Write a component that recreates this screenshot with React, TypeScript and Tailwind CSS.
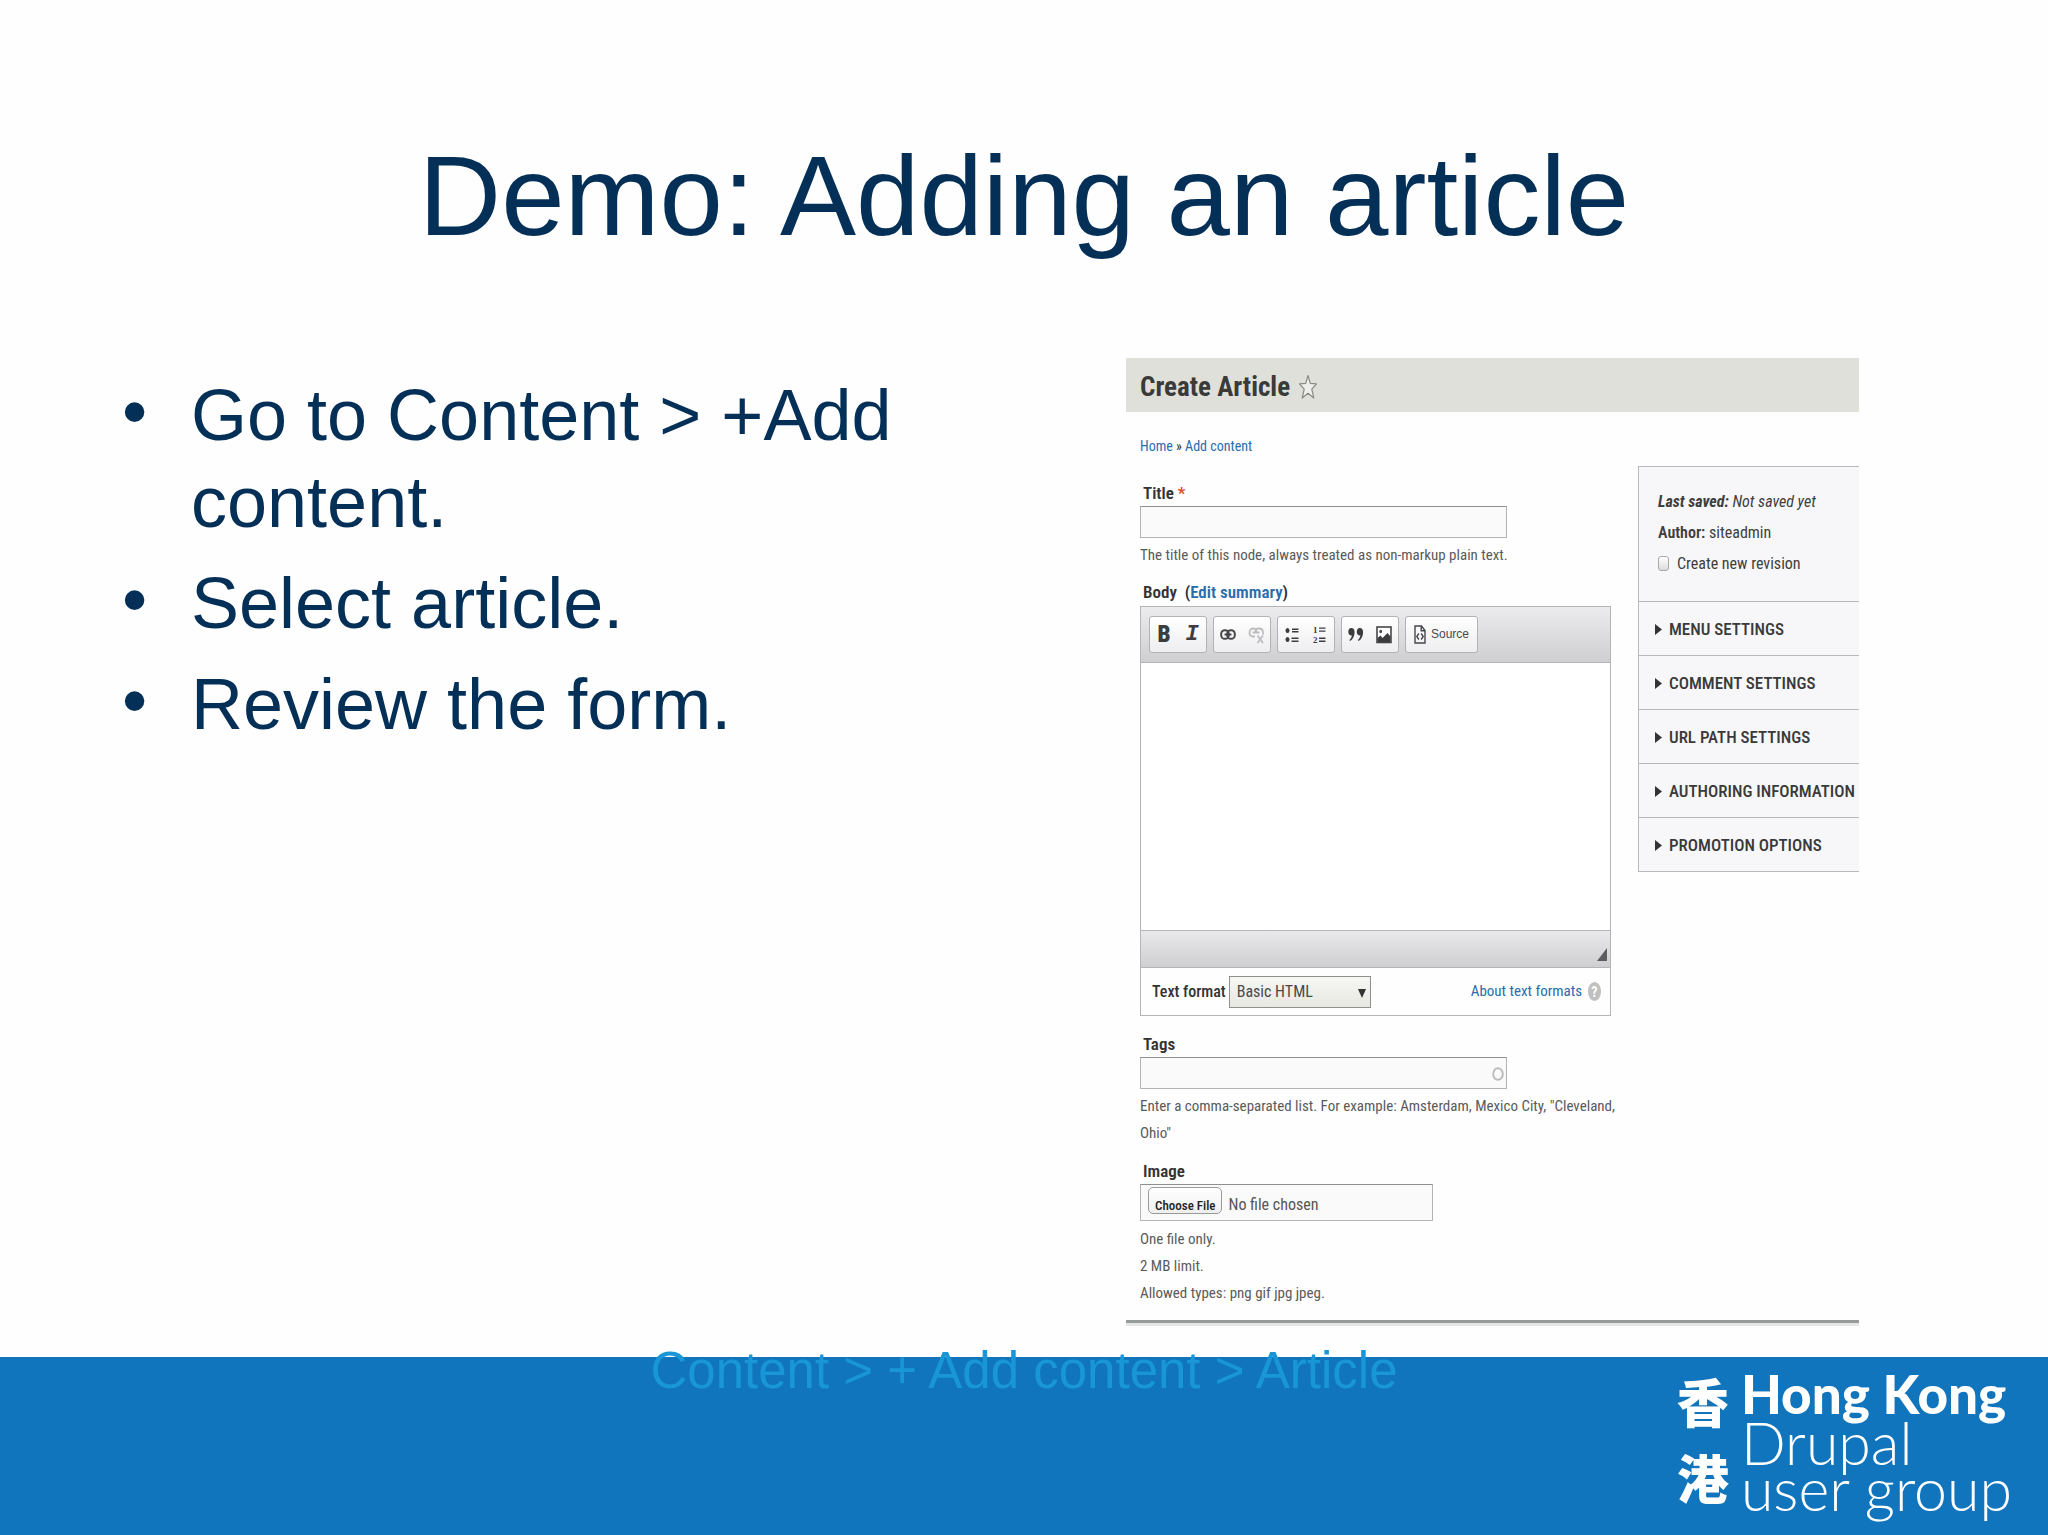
import React, { useState } from "react";

const steps = ["Go to Content > +Add content.", "Select article.", "Review the form."];

const settings = [
  "MENU SETTINGS",
  "COMMENT SETTINGS",
  "URL PATH SETTINGS",
  "AUTHORING INFORMATION",
  "PROMOTION OPTIONS",
];

const Star = () => (
  <svg width="20" height="26" viewBox="0 0 20 26" fill="#eeeeea" stroke="#8a8a87" strokeWidth="1.2" strokeLinejoin="round">
    <path d="M10 1.5 L12.3 9.3 L18.5 9.8 L13.8 15.2 L15.8 24 L10 19.3 L4.2 24 L6.2 15.2 L1.5 9.8 L7.7 9.3 Z" />
  </svg>
);

const LinkIcon = () => (
  <svg width="16" height="14" viewBox="0 0 16 14" fill="none" stroke="#47474a" strokeWidth="2">
    <rect x="1.2" y="2.2" width="7.6" height="8.6" rx="3.6" />
    <rect x="7.2" y="2.2" width="7.6" height="8.6" rx="3.6" />
    <path d="M4.5 6.5h7" />
  </svg>
);

const UnlinkIcon = () => (
  <svg width="17" height="18" viewBox="0 0 17 18" fill="none" stroke="#bdbdc0" strokeWidth="1.8">
    <path d="M7 10.5H5C2.5 10.5 1.5 9 1.5 7S2.5 2.5 5 2.5 8.5 4 8.5 6" />
    <path d="M7.5 6C7.5 3.5 8.5 2.5 11 2.5S15 4 15 7v1.5M4.5 6.5h7" />
    <path d="M9.5 9.5l5.5 7.5M15 9.5L9.5 17" />
  </svg>
);

const BulletsIcon = () => (
  <svg width="14" height="16" viewBox="0 0 14 16" fill="#3c3c3f">
    <ellipse cx="2.5" cy="3.5" rx="2" ry="2.5" />
    <ellipse cx="2.5" cy="12.5" rx="2" ry="2.5" />
    <path d="M7 1.5h6.5v1.5H7zM7 4h6.5v1.5H7zM6.5 10.5h7V12h-7zM6.5 13.5h7V15h-7z" />
  </svg>
);

const NumbersIcon = () => (
  <svg width="14" height="18" viewBox="0 0 14 18">
    <g fill="#3c3c3f" fontFamily="Liberation Serif, serif" fontSize="9" fontWeight="bold">
      <text x="0" y="7">1</text>
      <text x="0" y="17">2</text>
    </g>
    <path fill="#3c3c3f" d="M6 1.5h6.5v1.2H6zM6 4.5h6.5v1.2H6zM6 11.5h6.5v1.4H6zM6 14.5h6.5v1.4H6z" />
  </svg>
);

const QuoteIcon = () => (
  <svg width="16" height="15" viewBox="0 0 16 15" fill="#3c3c3f">
    <path d="M3.2 1C5.4 1 6.6 2.6 6.6 5.2 6.6 9.2 4.7 12.6 2 14L1.4 12.9C2.9 11.6 3.7 10.1 3.9 8.2 3.7 8.3 3.4 8.4 3 8.4 1.4 8.4.3 7 .3 4.8S1.5 1 3.2 1z" />
    <path d="M11.7 1C13.9 1 15.1 2.6 15.1 5.2 15.1 9.2 13.2 12.6 10.5 14L9.9 12.9C11.4 11.6 12.2 10.1 12.4 8.2 12.2 8.3 11.9 8.4 11.5 8.4 9.9 8.4 8.8 7 8.8 4.8S10 1 11.7 1z" />
  </svg>
);

const PictureIcon = () => (
  <svg width="16" height="18" viewBox="0 0 16 18">
    <rect x="1" y="1" width="14" height="15.5" fill="#fff" stroke="#47474a" strokeWidth="1.6" />
    <ellipse cx="4.7" cy="5.5" rx="1.4" ry="1.7" fill="#47474a" />
    <path fill="#3c3c3f" d="M1.5 16V12L4.5 9.5 6.5 12 11.5 7 14.5 10.5V16z" />
  </svg>
);

const SourceIcon = () => (
  <svg width="12" height="19" viewBox="0 0 12 19" fill="none" stroke="#47474a" strokeWidth="1.4">
    <path d="M1 1h6.5L11 5.5V18H1z" />
    <path d="M7.2 1v4.7H11" />
    <path d="M4.8 8.5L2.8 11.5 4.8 14.5M7.2 8.5L9.2 11.5 7.2 14.5" />
  </svg>
);

const ToolGroup = ({ children }: { children: React.ReactNode }) => (
  <div className="flex h-[37px] items-center rounded-[3px] border border-[#b3b3b6] bg-linear-to-b from-white to-[#eeeef0]">
    {children}
  </div>
);

const Tool = ({ label, children }: { label: string; children: React.ReactNode }) => (
  <button type="button" aria-label={label} className="flex h-full w-7 items-center justify-center">
    {children}
  </button>
);

const Editor = () => (
  <div className="mt-px border border-[#b5b5b8]">
    <div className="flex gap-[6px] border-b border-[#b5b5b8] bg-linear-to-b from-[#ececee] to-[#cfcfd2] px-2 py-[9px]">
      <ToolGroup>
        <Tool label="Bold"><span className="text-[23px] font-black text-[#3c3c3f]">B</span></Tool>
        <Tool label="Italic"><span className="font-['Liberation_Mono',monospace] text-[22px] font-bold text-[#3c3c3f] italic">I</span></Tool>
      </ToolGroup>
      <ToolGroup>
        <Tool label="Link"><LinkIcon /></Tool>
        <Tool label="Unlink"><UnlinkIcon /></Tool>
      </ToolGroup>
      <ToolGroup>
        <Tool label="Bulleted list"><BulletsIcon /></Tool>
        <Tool label="Numbered list"><NumbersIcon /></Tool>
      </ToolGroup>
      <ToolGroup>
        <Tool label="Block quote"><QuoteIcon /></Tool>
        <Tool label="Image"><PictureIcon /></Tool>
      </ToolGroup>
      <ToolGroup>
        <button type="button" className="flex h-full items-center gap-[5px] px-2 font-['Liberation_Sans',sans-serif] text-[12px] text-[#4a4a4c]">
          <SourceIcon />
          Source
        </button>
      </ToolGroup>
    </div>
    <textarea id="body" className="block h-[267px] w-full resize-none bg-white" />
    <div className="flex h-[38px] items-end justify-end border-y border-[#b5b5b8] bg-linear-to-b from-[#e9e9eb] to-[#cfcfd2] px-[3px] pb-[6px]">
      <svg width="10" height="13" viewBox="0 0 10 13" fill="#5c5c5e"><path d="M10 0V13H0z" /></svg>
    </div>
    <div className="flex h-[47px] items-center pr-[9px] pl-[11px]">
      <label htmlFor="format" className="text-[16px] font-medium text-[#333]">Text format</label>
      <div className="relative ml-[3px]">
        <select id="format" className="block h-8 w-[142px] appearance-none border border-[#8f8f8c] bg-linear-to-b from-[#f6f6f2] to-[#e8e8e3] pl-[7px] text-[16px] text-[#4a4a4a]">
          <option>Basic HTML</option>
        </select>
        <svg className="pointer-events-none absolute top-[13px] right-[5px]" width="8" height="9" viewBox="0 0 8 9" fill="#333"><path d="M0 0H8L4 9z" /></svg>
      </div>
      <a href="#formats" className="ml-auto text-[15px] text-[#2a6cab]">About text formats</a>
      <svg className="ml-[6px]" width="13" height="19" viewBox="0 0 13 19">
        <ellipse cx="6.5" cy="9.5" rx="6.5" ry="9.5" fill="#c0c0c0" />
        <text x="6.5" y="14.5" textAnchor="middle" fill="#fff" fontSize="14" fontWeight="bold">?</text>
      </svg>
    </div>
  </div>
);

const Sidebar = ({ revision, onRevision }: { revision: boolean; onRevision: (value: boolean) => void }) => (
  <aside className="mt-[54px] w-[221px] shrink-0 self-start border border-r-0 border-[#b9b9bc] bg-[#f7f7f9]">
    <div className="h-[134px] pt-[19px] pl-[19px] text-[16px] leading-[31px] text-[#3e3e3e]">
      <p className="italic"><b>Last saved:</b> Not saved yet</p>
      <p><b className="font-semibold">Author:</b> siteadmin</p>
      <label className="flex items-center gap-2">
        <input
          type="checkbox"
          checked={revision}
          onChange={(e) => onRevision(e.target.checked)}
          className="h-[15px] w-[11px] appearance-none rounded-[3px] border border-[#a9a9a9] bg-linear-to-b from-white to-[#dcdcdc] checked:bg-gray-500"
        />
        Create new revision
      </label>
    </div>
    {settings.map((name) => (
      <button
        key={name}
        type="button"
        className="flex h-[54px] w-full items-center gap-[7px] border-t border-[#b9b9bc] pt-[2px] pl-4 text-[17px] font-medium whitespace-nowrap text-[#3a3a3a]"
      >
        <svg width="7" height="11" viewBox="0 0 7 11" fill="#333"><path d="M0 0L7 5.5 0 11z" /></svg>
        {name}
      </button>
    ))}
  </aside>
);

const Label = ({ htmlFor, children }: { htmlFor: string; children: React.ReactNode }) => (
  <label htmlFor={htmlFor} className="block pl-[3px] text-[17px] leading-[26px] font-semibold text-[#333]">
    {children}
  </label>
);

const CreateArticle = () => {
  const [title, setTitle] = useState("");
  const [tags, setTags] = useState("");
  const [revision, setRevision] = useState(false);

  return (
    <section className="w-full max-w-[733px] border-b-3 border-[#e5e5e5] font-['Roboto_Condensed','Open_Sans',sans-serif] text-[#333]">
      <div className="border-b-3 border-[#989b9b]">
        <div className="flex h-[54px] items-center gap-2 bg-[#e0e0db] px-[14px] pt-1">
          <h2 className="text-[27px] font-bold text-[#3a3a38]">Create Article</h2>
          <Star />
        </div>
        <div className="flex gap-[27px] pl-[14px]">
          <form className="min-w-0 flex-1 pb-[13px] text-[15px] leading-[27px] text-[#5a5a5a]">
            <nav className="mt-[21px] text-[14px] text-[#333]">
              <a href="#home" className="text-[#2a6cab]">Home</a> » <a href="#add" className="text-[#2a6cab]">Add content</a>
            </nav>

            <div className="mt-5">
              <Label htmlFor="title">Title <span className="text-[#e0482f]">*</span></Label>
              <input
                id="title"
                value={title}
                onChange={(e) => setTitle(e.target.value)}
                className="block h-8 w-[367px] border border-[#b4b4b4] border-t-[#8f8f8f] bg-[#fbfafb] px-2"
              />
              <p className="mt-1">The title of this node, always treated as non-markup plain text.</p>
            </div>

            <div className="mt-[10px]">
              <Label htmlFor="body">Body &nbsp;(<a href="#summary" className="text-[#2a6cab]">Edit summary</a>)</Label>
              <Editor />
            </div>

            <div className="mt-[15px]">
              <Label htmlFor="tags">Tags</Label>
              <div className="relative w-[367px]">
                <input
                  id="tags"
                  value={tags}
                  onChange={(e) => setTags(e.target.value)}
                  className="block h-8 w-full border border-[#b4b4b4] border-t-[#8f8f8f] bg-[#fbfafb] px-2"
                />
                <svg className="absolute top-[10px] right-[3px]" width="12" height="14" viewBox="0 0 12 14" fill="none" stroke="#bcbcbc" strokeWidth="2">
                  <ellipse cx="6" cy="7" rx="4.8" ry="5.8" />
                </svg>
              </div>
              <p className="mt-1 whitespace-nowrap">
                Enter a comma-separated list. For example: Amsterdam, Mexico City, "Cleveland,
                <br />
                Ohio"
              </p>
            </div>

            <div className="mt-[11px]">
              <Label htmlFor="image">Image</Label>
              <input
                id="image"
                type="file"
                className="block h-[37px] w-[293px] border border-[#b4b4b4] border-t-[#8f8f8f] bg-[#fbfafb] pt-[2px] pl-[7px] text-[16px] text-[#555] file:mr-[6px] file:h-[27px] file:rounded-[5px] file:border file:border-solid file:border-[#9a9a9a] file:bg-linear-to-b file:from-white file:to-[#efefef] file:px-[6px] file:pt-1 file:text-[13px] file:font-medium file:text-[#222]"
              />
              <p className="mt-[5px]">One file only.<br />2 MB limit.<br />Allowed types: png gif jpg jpeg.</p>
            </div>
          </form>
          <Sidebar revision={revision} onRevision={setRevision} />
        </div>
      </div>
    </section>
  );
};

const Logo = () => (
  <div className="flex gap-3 text-white">
    <div className="flex flex-col items-center pt-[6px] font-['Noto_Sans_CJK_TC',sans-serif] text-[52px] leading-[76px] font-black">
      <span>香</span>
      <span>港</span>
    </div>
    <div className="pt-3 font-['Lato',sans-serif] whitespace-nowrap">
      <p className="text-[53px] leading-[50px] font-black">Hong Kong</p>
      <p className="text-[59px] leading-[48px] font-light">Drupal</p>
      <p className="text-[59px] leading-[44px] font-light">user group</p>
    </div>
  </div>
);

const App = () => {
  return (
    <div className="flex min-h-screen flex-col bg-[#fefefe] font-['Liberation_Sans',Arial,sans-serif] text-[#042f57]">
      <h1 className="pt-[132px] text-center text-[114px] leading-[128px]">Demo: Adding an article</h1>

      <main className="mt-[98px] flex justify-between pr-[189px] pb-[30px] pl-[122px]">
        <ul className="w-[800px] pt-[14px] text-[72px] leading-[87px]">
          {steps.map((step) => (
            <li key={step} className="mb-[14px] flex">
              <span className="w-[69px] shrink-0 leading-[79px]">•</span>
              <span>{step}</span>
            </li>
          ))}
        </ul>
        <CreateArticle />
      </main>

      <footer className="relative mt-auto flex h-[178px] justify-end bg-[#1075bc] pr-9">
        <p className="absolute inset-x-0 -top-4 text-center text-[51px] leading-[60px] text-[#1896d8]">
          Content &gt; + Add content &gt; Article
        </p>
        <Logo />
      </footer>
    </div>
  );
};

export default App;
